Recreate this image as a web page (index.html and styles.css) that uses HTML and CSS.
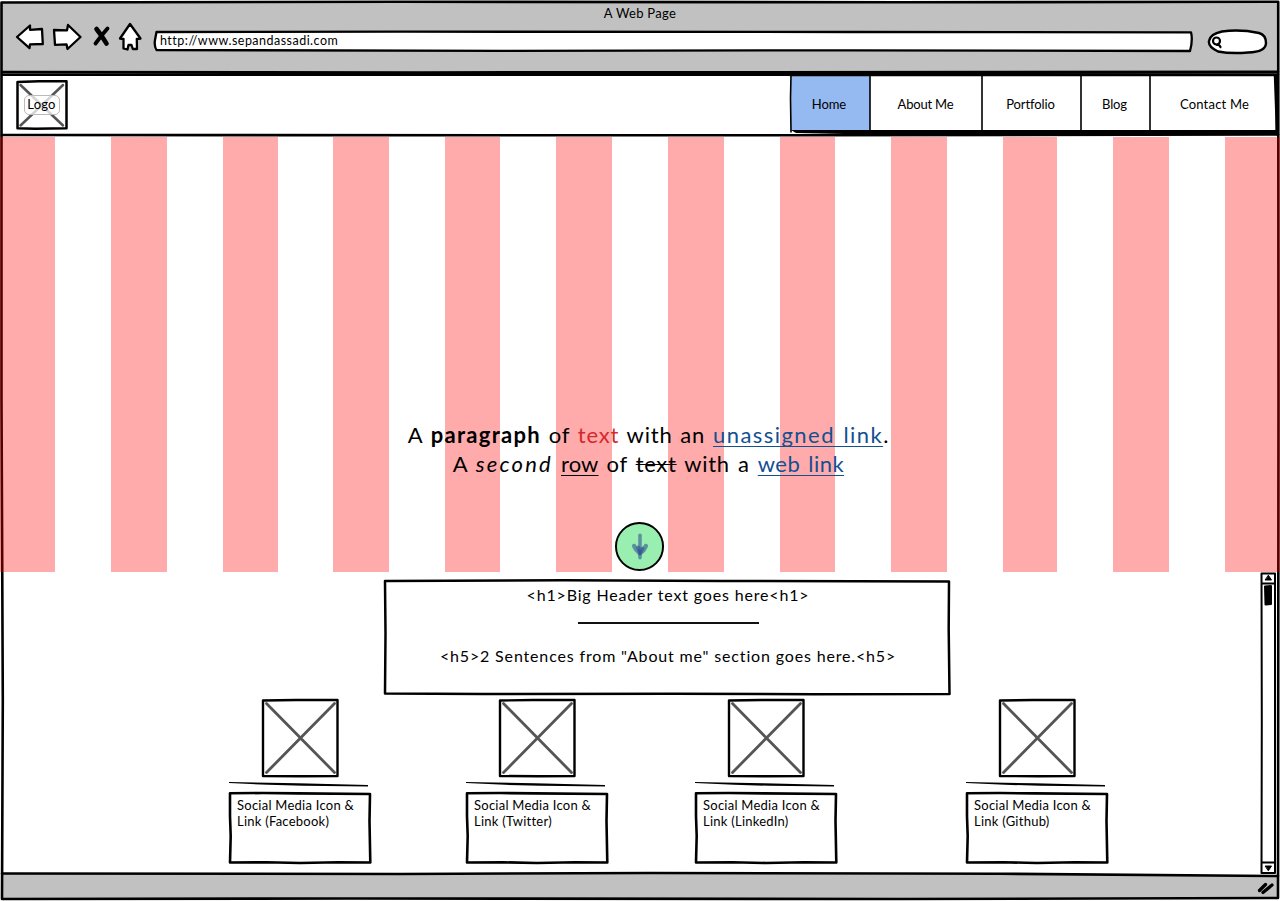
FILE: index.html
```html
<!DOCTYPE html>
<html lang="en">
<head>
<meta charset="utf-8">
<title>A Web Page</title>
<link rel="stylesheet" href="styles.css">
</head>
<body>
<svg class="defs" width="0" height="0" aria-hidden="true">
  <symbol id="placeholder" viewBox="0 0 78 80">
    <path class="ink" fill="#fff" stroke-width="2.4" d="M2 2.500L35 2L76.500 2V78L40 78.300L2 78Z"/>
    <path d="M5.500 5.500L73.500 74.500M73.500 5.500L5.500 74.500" stroke="#555" stroke-width="2.800" stroke-linecap="round"/>
  </symbol>
  <symbol id="rule" viewBox="0 0 144 8">
    <path d="M1 1L70 2.300L140 4V5.400L75 4.800L40 3.800L1 2Z"/>
  </symbol>
  <symbol id="note" viewBox="0 0 144 74">
    <path class="ink" fill="none" stroke-width="2.600" d="M2 2.300L35 2L70 2.400L142 3L141.500 30L142.300 71.500L110 71.300L72 72L38 71.300L2 71.500L2.700 45L2 25Z"/>
  </symbol>
</svg>
<div class="window">
  <svg class="frame" viewBox="0 0 1280 901" aria-hidden="true">
    <path fill="#c1c1c1" d="M2 2H1278V73H2ZM2 874L600 873.500L1278 876V898H2Z"/>
    <path class="ink" fill="none" stroke-width="2.600" d="M1.500 2.500L400 1.800L900 2.300L1278.200 1.800L1278.500 400L1278 898L900 899L350 898.500L2 899L2.800 700L1.500 400Z"/>
    <path class="ink" fill="none" stroke-width="2.600" d="M2 72L420 72.500L1278 71.700M2 74.800L300 74.600L1278 74.600M2 135L500 135.200L800 135.300L1278 134.500M2 873.500L400 874L650 873L1000 873.700L1278 876"/>
    <path class="ink" stroke-width="3" d="M1277 75V134"/>
  </svg>

  <header class="chrome">
    <div class="title">A Web Page</div>
    <div class="toolbar">
      <svg class="controls" width="134" height="34" viewBox="0 0 134 34">
        <g class="ink" fill="#fff" stroke-width="2.300">
          <path d="M2 17L15 5.500V9.800L27 9L27.800 24L15 24.300L14.500 28.200Z"/>
          <path d="M39 10L52 10.300L53 5L65.500 17L52.500 29L51.500 24.300L40 24.800Z"/>
          <path d="M105 18.500L115 4L125.500 18.500L121.800 19L122 29H117.800L116.500 25H113.500L112.500 29.500L108.500 28.500V19Z"/>
        </g>
        <path class="ink" fill="none" stroke-width="4.600" d="M81.500 9L86 15L91.500 23.500"/>
        <path class="ink" fill="none" stroke-width="3.800" d="M92.500 8.500L87 15L80.500 23.500"/>
      </svg>
      <div class="address">
        <svg viewBox="0 0 1042 24"><path class="ink" fill="#fff" stroke-width="2.300" d="M3.500 3L250 2.700L700 3L1038 3.300Q1040 11 1037 22L700 21.300L350 21.800L3.500 21Q1 17 2 11Z"/></svg>
        <span>http://www.sepandassadi.com</span>
      </div>
      <svg class="search" width="62" height="28" viewBox="0 0 62 28"><path class="ink" fill="#fff" stroke-width="2.400" d="M16 3.500Q34 1 53 5Q60 7 60 15Q60 24 42 24.500Q25 26 12 23.500Q2 19 3 13Q4 6 16 3.500Z"/><circle cx="10.500" cy="13" r="3.500" fill="none" stroke="#000" stroke-width="2.200"/><path class="ink" stroke-width="2.200" d="M11 17H13L14.500 19"/></svg>
    </div>
  </header>

  <div class="sitebar">
    <div class="logo">
      <svg width="54" height="52" viewBox="0 0 54 52"><path class="ink" fill="#fff" stroke-width="2.500" d="M2.500 3L24 2.300L51.500 2.300V49.300L20 49.800L2.500 49.300Z"/><path d="M5.500 6L48 46.500M48 6L5.500 46.500" stroke="#555" stroke-width="2.500" stroke-linecap="round"/></svg>
      <span>Logo</span>
    </div>
    <nav>
      <svg viewBox="0 0 490 62" aria-hidden="true">
        <path fill="#95baf1" d="M3 3H82V58H3Z"/>
        <path d="M3 57H81L488 57V61L80 61.500L8 60Z"/>
        <path class="ink" fill="none" stroke-width="1.600" d="M3 2.500L2.500 25L3 59M82 2V58M194 2V58M293 2V58M362 2V58"/>
        <path class="ink" fill="none" stroke-width="2.500" d="M2 2L487 2L489 58"/>
      </svg>
      <a class="home">Home</a><a class="about">About Me</a><a class="portfolio">Portfolio</a><a class="blog">Blog</a><a class="contact">Contact Me</a>
    </nav>
  </div>

  <section class="hero">
    <svg class="stripes" viewBox="0 0 1280 435" aria-hidden="true"><path shape-rendering="crispEdges" fill="#f00" fill-opacity=".33" d="M0 0H55V435H0ZM111 0H167V435H111ZM223 0H278V435H223ZM333 0H389V435H333ZM445 0H500V435H445ZM556 0H612V435H556ZM668 0H724V435H668ZM780 0H835V435H780ZM891 0H947V435H891ZM1003 0H1057V435H1003ZM1113 0H1169V435H1113ZM1225 0H1280V435H1225Z"/></svg>
    <p class="intro"><span class="first">A <b>paragraph</b> of <span class="red">text</span> with an <a>unassigned link</a>.</span><span class="second">A <i>second</i> <u>row</u> of <s>text</s> with a <a>web link</a></span></p>
    <svg class="down" width="52" height="52" viewBox="0 0 52 52"><circle cx="25.500" cy="26" r="24" fill="#98efb0" stroke="#000" stroke-width="2"/><g fill="none" stroke="#304d91" stroke-opacity=".58" stroke-linecap="round" stroke-linejoin="round"><path stroke-width="3.600" d="M26 14.500V37.500"/><path stroke-width="4.500" d="M20 25.500L22 29L26 33L29.500 30L32 25.500"/><path stroke-width="4" d="M24 27L26 32L28.500 28"/></g></svg>
  </section>

  <main>
    <section class="headline">
      <svg viewBox="0 0 568 118" aria-hidden="true"><path class="ink" fill="#fff" stroke-width="2.500" d="M2 2L180 1.300L340 2L566 2.500L565.700 50L566.500 115L430 115.300L290 114.700L100 115L2 114.500L2.500 55Z"/></svg>
      <h1>&lt;h1&gt;Big Header text goes here&lt;h1&gt;</h1>
      <div class="line"></div>
      <h5>&lt;h5&gt;2 Sentences from "About me" section goes here.&lt;h5&gt;</h5>
    </section>
    <div class="cards">
      <article><svg class="picture"><use href="#placeholder"/></svg><svg class="rule"><use href="#rule"/></svg><div class="note"><svg><use href="#note"/></svg><p>Social Media Icon &amp;<br><span class="fb">Link (Facebook)</span></p></div></article>
      <article><svg class="picture"><use href="#placeholder"/></svg><svg class="rule"><use href="#rule"/></svg><div class="note"><svg><use href="#note"/></svg><p>Social Media Icon &amp;<br><span class="tw">Link (Twitter)</span></p></div></article>
      <article><svg class="picture"><use href="#placeholder"/></svg><svg class="rule"><use href="#rule"/></svg><div class="note"><svg><use href="#note"/></svg><p>Social Media Icon &amp;<br><span class="li">Link (LinkedIn)</span></p></div></article>
      <article><svg class="picture"><use href="#placeholder"/></svg><svg class="rule"><use href="#rule"/></svg><div class="note"><svg><use href="#note"/></svg><p>Social Media Icon &amp;<br><span class="gh">Link (Github)</span></p></div></article>
    </div>
    <svg class="scrollbar" width="18" height="303" viewBox="0 0 18 303" aria-hidden="true">
      <path class="ink" fill="none" stroke-width="2" d="M1.500 1.500H15V301H1.500L1.800 150ZM2 11.500H15M2 290.500H15"/>
      <path class="ink" stroke-width="1" d="M8.500 3.500L11.500 8H5.500ZM5.500 294H11.500L8.500 298.500Z"/>
      <path class="ink" stroke-width="2" d="M5 14.500L11 14L11 32L5.500 32.500Z"/>
    </svg>
  </main>

  <footer><svg width="18" height="16" viewBox="0 0 18 16"><path class="ink" fill="none" stroke-width="3.300" d="M2.500 10.500L8.500 4.500M6 12.500L15 5"/></svg></footer>
</div>
</body>
</html>
```
FILE: styles.css
```css
* { box-sizing: border-box; }
body { margin: 0; background: #fff; color: #000; font: 13px/16px Lato, "Open Sans", sans-serif; }
svg { display: block; }
.defs { position: absolute; }
.ink { stroke: #000; stroke-linejoin: round; stroke-linecap: round; }
.window { position: relative; width: 1280px; height: 901px; display: flex; flex-direction: column; overflow: hidden; white-space: nowrap; }
.frame { position: absolute; inset: 0; width: 1280px; height: 901px; }
.chrome { position: relative; height: 73px; padding-top: 5px; }
.title { text-align: center; letter-spacing: .3px; }
.toolbar { display: flex; padding-left: 15px; }
.controls { margin-top: -1px; }
.address { position: relative; width: 1042px; height: 24px; margin: 8px 0 0 4px; padding: 4px 0 0 7px; font-size: 12.5px; }
.address svg { position: absolute; inset: 0; width: 100%; height: 100%; }
.address span { position: relative; letter-spacing: .48px; }
.search { margin: 7px 0 0 11px; }
.sitebar { position: relative; height: 64px; display: flex; justify-content: space-between; }
.logo { position: relative; width: 54px; height: 52px; margin: 6px 0 0 15px; display: grid; place-items: center; }
.logo svg { position: absolute; inset: 0; }
.logo span { position: relative; width: 36px; height: 20px; margin: -1px 1px 0 0; border: 1px solid #bbb; border-radius: 5px; background: rgba(255,255,255,.75); text-align: center; line-height: 17px; letter-spacing: .2px; }
nav { position: relative; width: 492px; display: flex; }
nav svg { position: absolute; left: 0; top: 0; width: 490px; height: 62px; }
nav a { position: relative; text-align: center; padding-top: 23px; letter-spacing: -.1px; }
.home { width: 82px; } .about { width: 111px; letter-spacing: -.2px; } .portfolio { width: 99px; } .blog { width: 69px; } .contact { width: 131px; letter-spacing: .2px; }
.hero { position: relative; height: 435px; display: flex; flex-direction: column; align-items: center; padding-top: 283px; }
.stripes { position: absolute; inset: 0; width: 100%; height: 100%; }
.intro { position: relative; width: 500px; margin: 0 0 0 17px; font-size: 22px; line-height: 29px; text-align: center; }
.intro > span { display: block; }
.first { letter-spacing: .8px; word-spacing: 1.4px; }
.second { letter-spacing: .7px; word-spacing: 1.8px; }
.intro b { letter-spacing: 1.3px; }
.intro i { letter-spacing: 2.2px; }
.first a { letter-spacing: 1.45px; }
.second a { letter-spacing: .5px; }
.intro .red { color: #d3292c; }
.intro a { color: #134f91; }
.intro a, .intro u { text-decoration: underline; text-decoration-thickness: 1px; text-underline-offset: 3px; text-decoration-skip-ink: none; }
.intro u { letter-spacing: .1px; }
.intro s { text-decoration-thickness: 1px; }
.down { position: relative; margin-top: 43px; }
main { position: relative; height: 301px; padding-top: 7px; }
.headline { position: relative; width: 568px; height: 118px; margin-left: 383px; padding-top: 5px; display: flex; flex-direction: column; align-items: center; }
.headline > svg { position: absolute; inset: 0; width: 568px; height: 118px; }
h1, h5 { position: relative; margin: 0; font-size: 16px; line-height: 22px; font-weight: 400; letter-spacing: .84px; }
h1 { margin-left: 2px; }
h5 { margin-top: 21px; margin-left: 2px; }
.line { position: relative; width: 181px; height: 2px; margin: 16px 0 0 2px; background: #111; }
.cards { display: flex; padding-left: 228px; }
article { width: 144px; margin-right: 93px; padding-top: 1px; }
article:nth-child(2) { margin-right: 85px; }
article:nth-child(3) { margin-right: 127px; }
article:last-child { margin-right: 0; }
.picture { width: 78px; height: 80px; margin: 0 0 0 33px; }
.rule { width: 144px; height: 8px; margin-top: 3px; }
.note { position: relative; width: 144px; height: 74px; margin-top: 2px; padding: 6px 9px; }
.note svg { position: absolute; inset: 0; width: 144px; height: 74px; }
.note p { position: relative; margin: 0; letter-spacing: .25px; }
.scrollbar { position: absolute; left: 1260px; top: 0; }
footer { position: relative; display: flex; justify-content: flex-end; padding: 7px 5px 0 0; }
```
